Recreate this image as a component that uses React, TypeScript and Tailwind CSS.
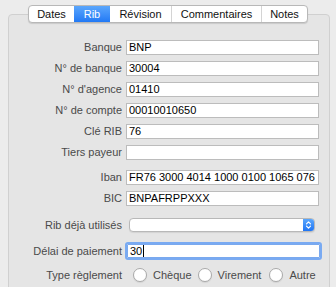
import { ReactNode } from 'react';

const tabs = [
  { name: 'Dates', w: 'w-[45px]' },
  { name: 'Rib', w: 'w-[36px]' },
  { name: 'Révision', w: 'w-[61px]' },
  { name: 'Commentaires', w: 'w-[90px]' },
  { name: 'Notes', w: 'w-[46px]' },
];

function Row({ label, children }: { label: string; children: ReactNode }) {
  return (
    <div className="flex items-center">
      <div className="w-[113px] shrink-0 text-right text-[11px] leading-none text-[#4a4a4a] whitespace-nowrap">
        {label}
      </div>
      <div className="ml-[4px]">{children}</div>
    </div>
  );
}

function Field({ value }: { value?: string }) {
  return (
    <div className="w-[193px] h-[15px] bg-white border border-[#bcbcbc] pl-[2px] flex items-center text-[11px] leading-none text-black whitespace-nowrap overflow-hidden">
      {value}
    </div>
  );
}

function Radio({ label }: { label: string }) {
  return (
    <div className="flex items-center">
      <div className="w-[14px] h-[14px] rounded-full bg-white border border-[#a9a9a9] shadow-[0_1px_1px_rgba(0,0,0,0.08)]" />
      <span className="ml-[6px] text-[11px] leading-none text-[#4a4a4a]">{label}</span>
    </div>
  );
}

export default function App() {
  return (
    <div
      className="relative w-[336px] h-[287px] overflow-hidden bg-[#ececec]"
      style={{ fontFamily: '"Liberation Sans", Arial, sans-serif' }}
    >
      <div className="ml-[8px] mt-[14px] w-[322px] h-[290px] border border-[#d0d0d0] bg-[#e5e5e5] rounded-t-[4px] pt-[25px]">
        <div className="flex flex-col gap-[6px]">
          <Row label="Banque"><Field value="BNP" /></Row>
          <Row label="N° de banque"><Field value="30004" /></Row>
          <Row label="N° d'agence"><Field value="01410" /></Row>
          <Row label="N° de compte"><Field value="00010010650" /></Row>
          <Row label="Clé RIB"><Field value="76" /></Row>
          <Row label="Tiers payeur"><Field /></Row>
        </div>
        <div className="mt-[10px] flex flex-col gap-[6px]">
          <Row label="Iban"><Field value="FR76 3000 4014 1000 0100 1065 076" /></Row>
          <Row label="BIC"><Field value="BNPAFRPPXXX" /></Row>
        </div>

        <div className="mt-[12px]">
          <Row label="Rib déjà utilisés">
            <div className="ml-[3px] w-[186px] h-[14px] flex bg-white border border-[#b8b8b8] rounded-[4px] overflow-hidden shadow-[0_1px_1px_rgba(0,0,0,0.08)]">
              <div className="flex-1" />
              <div className="w-[11px] h-full bg-gradient-to-b from-[#5aa6fc] to-[#1f75f4] flex items-center justify-center">
                <svg width="7" height="10" viewBox="0 0 7 10" fill="none" stroke="white" strokeWidth="1.2" strokeLinecap="round" strokeLinejoin="round">
                  <path d="M1.5 3.8 L3.5 1.8 L5.5 3.8" />
                  <path d="M1.5 6.2 L3.5 8.2 L5.5 6.2" />
                </svg>
              </div>
            </div>
          </Row>
        </div>

        <div className="mt-[12px]">
          <Row label="Délai de paiement">
            <div className="ml-[1px] w-[193px] h-[14px] bg-white border border-[#7aa9ee] outline outline-2 outline-[#79aaf2] rounded-[1px] pl-[2px] flex items-center text-[11px] leading-none text-black">
              30
              <span className="w-[1px] h-[12px] bg-black ml-[1px]" />
            </div>
          </Row>
        </div>

        <div className="mt-[10px] flex items-center">
          <div className="w-[113px] shrink-0 text-right text-[11px] leading-none text-[#4a4a4a] whitespace-nowrap">
            Type règlement
          </div>
          <div className="ml-[11px] flex items-center gap-[6px]">
            <Radio label="Chèque" />
            <Radio label="Virement" />
            <div className="ml-[2px]"><Radio label="Autre" /></div>
          </div>
        </div>
      </div>

      <div className="absolute left-[28px] top-[5px] h-[18px] flex bg-white border border-[#b8b8b8] rounded-[4px] overflow-hidden shadow-[0_1px_1px_rgba(0,0,0,0.12)]">
        {tabs.map((t, i) => (
          <div
            key={t.name}
            className={
              t.name === 'Rib'
                ? `${t.w} flex items-center justify-center text-[11px] leading-none text-white bg-gradient-to-b from-[#5aa6fc] to-[#2179f5]`
                : `${t.w} flex items-center justify-center text-[11px] leading-none text-[#111] ${i > 0 && tabs[i - 1].name !== 'Rib' ? 'border-l border-[#d4d4d4]' : ''}`
            }
          >
            {t.name}
          </div>
        ))}
      </div>
    </div>
  );
}
